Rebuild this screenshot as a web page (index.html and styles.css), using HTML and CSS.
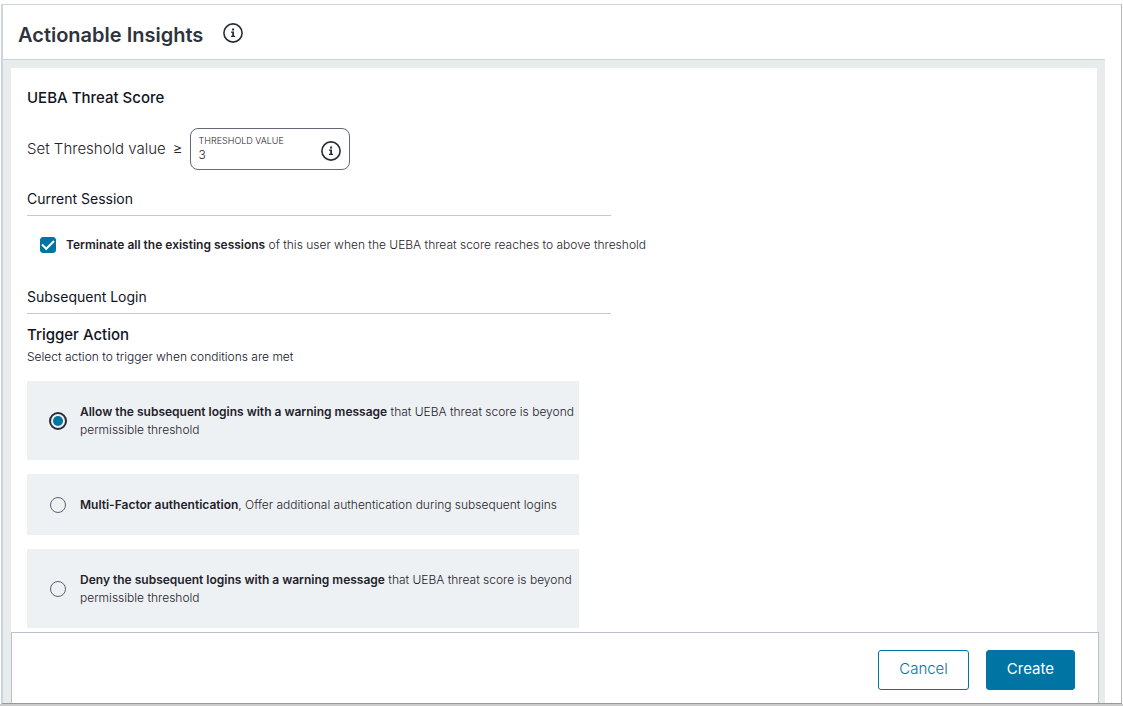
FILE: index.html
```html
<!DOCTYPE html>
<html lang="en">
<head>
<meta charset="utf-8">
<title>Actionable Insights</title>
<link rel="stylesheet" href="styles.css">
</head>
<body>
<svg width="0" height="0" class="sprite" aria-hidden="true">
  <symbol id="info" viewBox="0 0 20 20">
    <circle cx="10" cy="10" r="9.1" fill="none" stroke="currentColor" stroke-width="1.6"/>
    <path d="M9.1 5.6h2v1.8h-2zM8 8.6h3v4.1h1.1v1.2H8v-1.2h1.2V9.8H8z" fill="currentColor"/>
  </symbol>
</svg>
<div class="window">
  <header class="header">
    <h1 class="title">Actionable Insights</h1>
    <button class="info-button" type="button" aria-label="About actionable insights"><svg class="info-icon"><use href="#info"/></svg></button>
  </header>
  <form class="workspace">
    <main class="panel">
      <h2 class="heading">UEBA Threat Score</h2>
      <div class="threshold">
        <span class="threshold-text">Set Threshold value</span>
        <span class="threshold-text">≥</span>
        <div class="field">
          <div class="field-body">
            <label class="field-label" for="threshold">THRESHOLD VALUE</label>
            <input class="field-input" id="threshold" type="text" value="3">
          </div>
          <button class="info-button" type="button" aria-label="About threshold value"><svg class="info-icon"><use href="#info"/></svg></button>
        </div>
      </div>
      <h3 class="section">Current Session</h3>
      <label class="check-row">
        <input class="check" type="checkbox" checked>
        <span><b>Terminate all the existing sessions</b> of this user when the UEBA threat score reaches to above threshold</span>
      </label>
      <h3 class="section">Subsequent Login</h3>
      <h2 class="heading trigger">Trigger Action</h2>
      <p class="hint">Select action to trigger when conditions are met</p>
      <div class="options">
        <label class="option">
          <input class="radio" type="radio" name="action" checked>
          <span><b>Allow the subsequent logins with a warning message</b> that UEBA threat score is beyond permissible threshold</span>
        </label>
        <label class="option">
          <input class="radio" type="radio" name="action">
          <span><b>Multi-Factor authentication</b>, Offer additional authentication during subsequent logins</span>
        </label>
        <label class="option">
          <input class="radio" type="radio" name="action">
          <span><b>Deny the subsequent logins with a warning message</b> that UEBA threat score is beyond permissible threshold</span>
        </label>
      </div>
    </main>
    <footer class="footer">
      <button class="button" type="button">Cancel</button>
      <button class="button primary" type="submit">Create</button>
    </footer>
  </form>
</div>
</body>
</html>
```
FILE: styles.css
```css
* { box-sizing: border-box; }

body {
  margin: 0;
  min-height: 100vh;
  display: flex;
  flex-direction: column;
  padding: 4px 1px 0;
  border-bottom: 2px solid #cccccc;
  background: #fff;
  color: #1f222b;
  font: 300 12px/18px Inter, "Liberation Sans", sans-serif;
}

.sprite { position: absolute; }

.window {
  flex: 1;
  display: flex;
  flex-direction: column;
  padding-right: 16px;
  border-top: 1px solid #cdd4dd;
  border-left: 2px solid #cdd4dd;
  border-right: 1px solid #b4b6ba;
  border-bottom: 1px solid #999;
}

.header {
  display: flex;
  align-items: center;
  gap: 20px;
  padding: 16px 15px 10px;
  border-bottom: 1px solid #cdd1dc;
}

.title {
  margin: 0;
  color: #2e333d;
  font-size: 20px;
  line-height: 28px;
  font-weight: 600;
}

.info-button {
  display: flex;
  padding: 0;
  border: 0;
  background: none;
  color: #2a2c35;
}

.header .info-button { padding-bottom: 4px; }

.info-icon { width: 20px; height: 20px; }

.workspace {
  flex: 1;
  display: flex;
  flex-direction: column;
  padding: 8px 6px 0 8px;
  background: #e9ecec;
}

.panel {
  flex: 1;
  margin-right: 2px;
  padding: 20px 16px 4px;
  background: #fff;
}

.heading {
  margin: 0;
  color: #12131f;
  font-size: 15px;
  line-height: 20px;
  font-weight: 500;
}

.threshold {
  display: flex;
  align-items: center;
  gap: 7px;
  margin: 20px 0 19px;
}

.threshold-text { font-size: 15px; line-height: 20px; }

.field {
  display: flex;
  align-items: center;
  width: 160px;
  height: 42px;
  padding: 3px 8px 0 8px;
  border: 1px solid #616978;
  border-radius: 8px;
}

.field-body {
  flex: 1;
  min-width: 0;
  display: flex;
  flex-direction: column;
  padding-bottom: 6px;
}

.field-label { font-size: 9px; line-height: 14px; }

.field-input {
  width: 100%;
  padding: 0;
  border: 0;
  background: none;
  color: inherit;
  font: inherit;
  line-height: 14px;
}

.section {
  width: 584px;
  max-width: 100%;
  margin: 0;
  padding-bottom: 6px;
  border-bottom: 1px solid #c8c9cd;
  color: #12131f;
  font-size: 14px;
  line-height: 20px;
  font-weight: 400;
}

b { font-weight: 600; }

.check-row {
  display: flex;
  align-items: center;
  gap: 10px;
  margin: 20px 13px 33px;
}

.check, .radio {
  appearance: none;
  flex: none;
  display: grid;
  place-content: center;
  width: 16px;
  height: 16px;
  margin: 0;
  border: 1px solid #5e616e;
}

.check { border-radius: 3px; }

.check:checked { border-color: #0074a2; background: #0074a2; }

.check:checked::before {
  content: "";
  width: 10px;
  height: 5px;
  margin-bottom: 3px;
  border: solid #fff;
  border-width: 0 0 2px 2px;
  transform: rotate(-45deg);
}

.trigger { margin-top: 11px; }

.hint { margin: 3px 0 15px; color: #12131f; }

.options { display: grid; gap: 14px; max-width: 552px; }

.option {
  display: flex;
  align-items: center;
  gap: 14px;
  padding: 22px 4px 21px 23px;
  background: #edf1f4;
}

.radio { border-radius: 50%; }

.radio:checked {
  width: 18px;
  height: 18px;
  margin: 0 -1px;
  border: 2px solid #2a2c3a;
}

.radio:checked::before {
  content: "";
  width: 10px;
  height: 10px;
  border-radius: 50%;
  background: #0074a2;
}

.footer {
  display: flex;
  justify-content: flex-end;
  gap: 17px;
  padding: 17px 23px 13px;
  border: 1px solid #b9c0cc;
  border-bottom: 0;
  background: #fff;
}

.button {
  height: 40px;
  padding: 0 20px 2px;
  border: 1px solid #0074a2;
  border-radius: 3px;
  background: #fff;
  color: #0074a2;
  font: 300 15px/20px Inter, "Liberation Sans", sans-serif;
}

.primary { background: #0074a2; color: #fff; font-weight: 400; }
```
